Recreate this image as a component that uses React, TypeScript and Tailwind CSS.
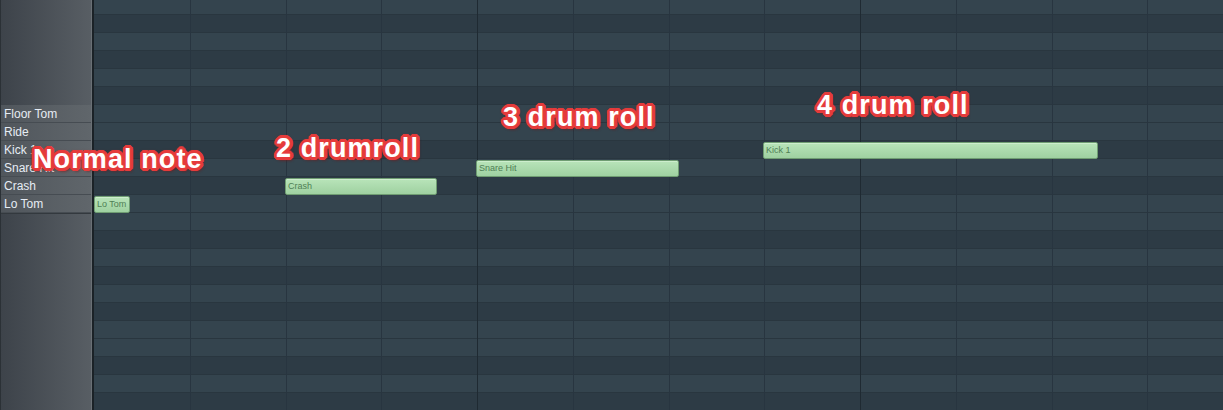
const ROWS = ["B", "A#", "A", "G#", "G", "F#", "F", "E", "D#", "D", "C#", "C", "B", "A#", "A", "G#", "G", "F#", "F", "E", "D#", "D", "C#"];

const LABELS: Record<number, string> = {
  6: "Floor Tom",
  7: "Ride",
  8: "Kick 1",
  9: "Snare Hit",
  10: "Crash",
  11: "Lo Tom",
};

// left / top / width in px, relative to the grid
const NOTES = [
  { name: "Lo Tom", left: 0, top: 196, width: 36 },
  { name: "Crash", left: 191, top: 178, width: 152 },
  { name: "Snare Hit", left: 382, top: 160, width: 203 },
  { name: "Kick 1", left: 669, top: 142, width: 335 },
];

const NOTES_TEXT = [
  { text: "Normal note", left: 33, top: 146 },
  { text: "2 drumroll", left: 276, top: 135 },
  { text: "3 drum roll", left: 503, top: 104 },
  { text: "4 drum roll", left: 817, top: 92 },
];

const outline =
  "[text-shadow:-3px_0_0_#e53b3b,3px_0_0_#e53b3b,0_-3px_0_#e53b3b,0_3px_0_#e53b3b,-2px_-2px_0_#e53b3b,2px_-2px_0_#e53b3b,-2px_2px_0_#e53b3b,2px_2px_0_#e53b3b,-3px_-1px_0_#e53b3b,3px_1px_0_#e53b3b,-1px_-3px_0_#e53b3b,1px_3px_0_#e53b3b,-3px_1px_0_#e53b3b,3px_-1px_0_#e53b3b,1px_-3px_0_#e53b3b,-1px_3px_0_#e53b3b,0_0_4px_#a51d1d,2px_3px_3px_#7a1616]";

function isBlack(key: string) {
  return key.includes("#");
}

function KeyPanel() {
  return (
    <div className="flex shrink-0">
      <div className="w-[91px] overflow-hidden border-l border-[#2b3136] bg-linear-to-r from-[#3d434a] to-[#585e64]">
        <div className="-mt-[3px] flex flex-col">
          {ROWS.map((key, i) =>
            LABELS[i] ? (
              <div
                key={i}
                className="h-[18px] shrink-0 border-b border-[#464c52] bg-linear-to-r from-[#50565c] to-[#60666b] pl-[3px] text-[12px] leading-[19px] text-[#e6ecf4] whitespace-nowrap"
              >
                {LABELS[i]}
              </div>
            ) : (
              <div key={i} className={`h-[18px] shrink-0 ${i === 12 ? "border-t border-[#33393e]" : ""}`} />
            )
          )}
        </div>
      </div>
      <div className="w-px bg-[#6a7075]" />
      <div className="w-[2px] bg-[#1b2227]" />
    </div>
  );
}

function Grid() {
  return (
    <div className="relative flex-1 overflow-hidden">
      <div className="-mt-[3px] flex flex-col">
        {ROWS.map((key, i) => (
          <div
            key={i}
            className={`h-[18px] shrink-0 border-b border-[#29363f] ${isBlack(key) ? "bg-[#2d3b45]" : "bg-[#34444e]"}`}
          />
        ))}
      </div>

      {/* beat / bar lines */}
      <div className="absolute inset-0 flex">
        {Array.from({ length: 12 }).map((_, i) => (
          <div
            key={i}
            className={`h-full w-[95.75px] shrink-0 ${
              i === 0 ? "" : i % 4 === 0 ? "border-l border-[#1f2a32]" : "border-l border-[#283540]"
            }`}
          />
        ))}
      </div>

      {NOTES.map((n) => (
        <div
          key={n.name}
          className="absolute h-[17px] overflow-hidden rounded-[2px] border border-[#6f9d72] bg-linear-to-b from-[#b8e4b9] to-[#9fd1a1] pl-[2px] font-['Liberation_Sans',Arial,sans-serif] text-[9px] leading-[15px] text-[#4f7f55] shadow-[inset_0_1px_0_#cdeecd]"
          style={{ left: n.left, top: n.top, width: n.width }}
        >
          {n.name}
        </div>
      ))}
    </div>
  );
}

export default function App() {
  return (
    <div className="relative flex h-[410px] w-[1223px] overflow-hidden bg-[#2d3b45] font-['Liberation_Sans',Arial,sans-serif]">
      <KeyPanel />
      <Grid />

      {NOTES_TEXT.map((t) => (
        <div
          key={t.text}
          className={`absolute whitespace-nowrap text-[27px] leading-[27px] font-bold tracking-[1.1px] text-white ${outline}`}
          style={{ left: t.left, top: t.top }}
        >
          {t.text}
        </div>
      ))}
    </div>
  );
}
